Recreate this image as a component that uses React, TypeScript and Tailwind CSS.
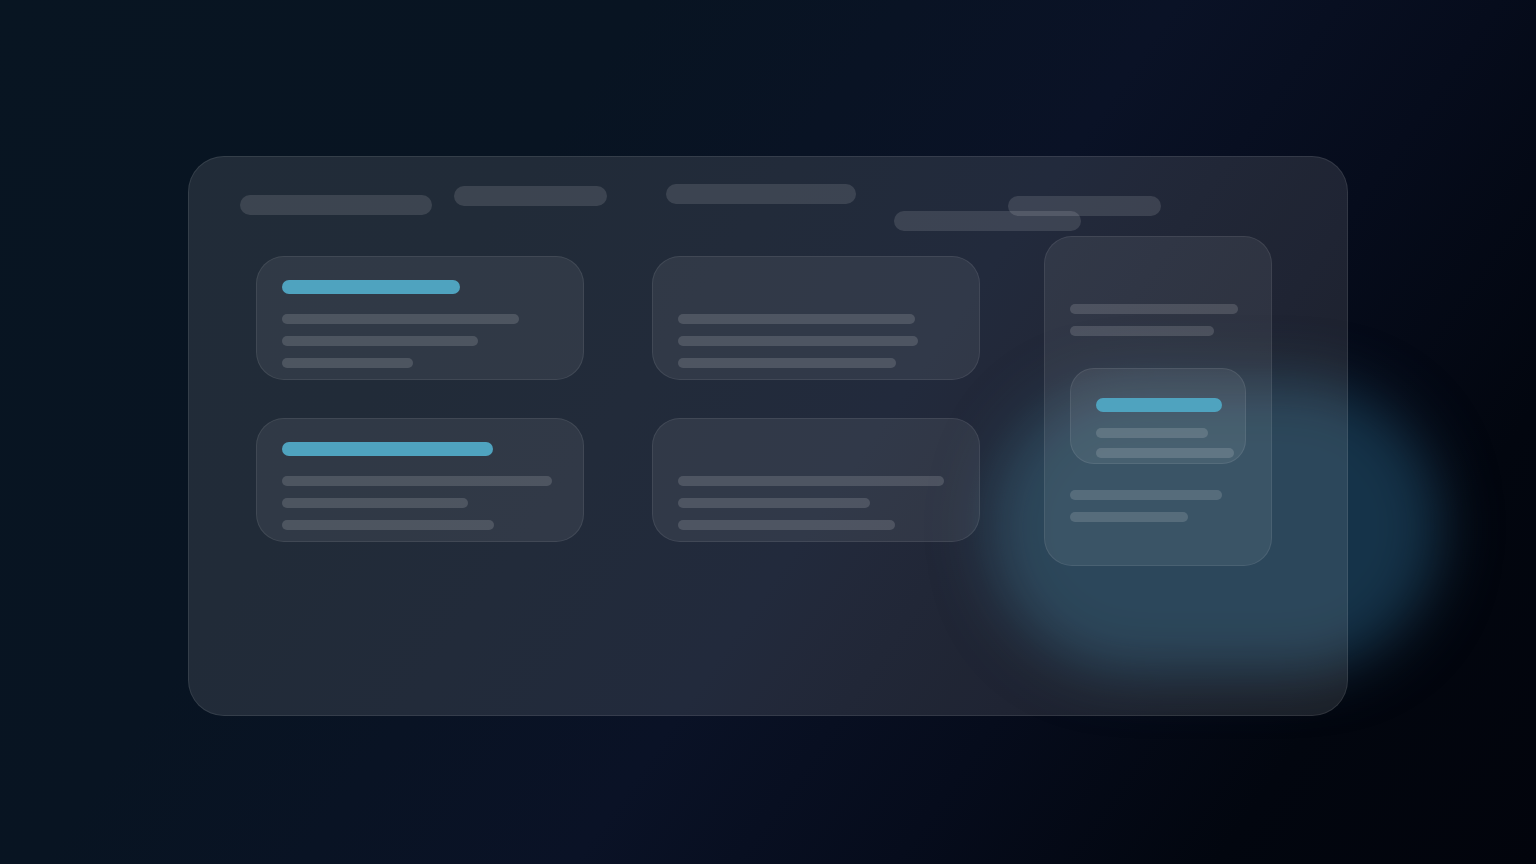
const navPills = [
  { width: "w-[192px]", offset: "mt-[11px] ml-[51px]" },
  { width: "w-[153px]", offset: "mt-[2px] ml-[22px]" },
  { width: "w-[190px]", offset: "mt-0 ml-[59px]" },
  { width: "w-[187px]", offset: "mt-[27px] ml-[38px]" },
  { width: "w-[153px]", offset: "mt-[12px] ml-[-73px]" },
];

const cards = [
  { accent: "w-[178px]", lines: ["w-[237px]", "w-[196px]", "w-[131px]"] },
  { accent: "", lines: ["w-[237px]", "w-[240px]", "w-[218px]"] },
  { accent: "w-[211px]", lines: ["w-[270px]", "w-[186px]", "w-[212px]"] },
  { accent: "", lines: ["w-[266px]", "w-[192px]", "w-[217px]"] },
];

function Line({ width }: { width: string }) {
  return <div className={`h-[10px] rounded-full bg-white/14 ${width}`} />;
}

function Accent({ width }: { width: string }) {
  return <div className={`h-[14px] rounded-full bg-[#4fa3bf] ${width}`} />;
}

export default function App() {
  return (
    <div className="relative h-[864px] w-[1536px] overflow-hidden bg-[linear-gradient(125deg,#081522_0%,#081422_30%,#0a1226_55%,#060c1c_70%,#02060f_85%,#02040c_100%)] pl-[188px] pt-[156px]">
      {/* glow behind the glass panel */}
      <div className="absolute left-[990px] top-[382px] h-[290px] w-[450px] rounded-full bg-[#153349] blur-[28px]" />

      <div className="relative h-[560px] w-[1160px] rounded-[36px] border border-white/9 bg-white/10">
        <div className="flex h-[74px] items-start pt-[27px]">
          {navPills.map((pill, i) => (
            <div key={i} className={`h-[20px] shrink-0 rounded-full bg-white/12 ${pill.width} ${pill.offset}`} />
          ))}
        </div>

        <div className="flex items-start pl-[67px] pt-[25px]">
          <div className="grid w-[724px] grid-cols-[328px_328px] gap-x-[68px] gap-y-[38px]">
            {cards.map((card, i) => (
              <div key={i} className="h-[124px] rounded-[28px] border border-white/8 bg-white/7 px-[25px] pt-[23px]">
                <div className="h-[14px]">{card.accent && <Accent width={card.accent} />}</div>
                <div className="mt-[20px] flex flex-col gap-[12px]">
                  {card.lines.map((line, j) => (
                    <Line key={j} width={line} />
                  ))}
                </div>
              </div>
            ))}
          </div>

          <div className="ml-[64px] mt-[-20px] h-[330px] w-[228px] rounded-[28px] border border-white/8 bg-white/7 px-[25px] pt-[67px]">
            <div className="flex flex-col gap-[12px]">
              <Line width="w-[168px]" />
              <Line width="w-[144px]" />
            </div>
            <div className="mt-[32px] h-[96px] w-[176px] rounded-[24px] border border-white/8 bg-white/7 px-[25px] pt-[29px]">
              <Accent width="w-[126px]" />
              <div className="mt-[16px] flex flex-col gap-[10px]">
                <Line width="w-[112px]" />
                <Line width="w-[138px]" />
              </div>
            </div>
            <div className="mt-[26px] flex flex-col gap-[12px]">
              <Line width="w-[152px]" />
              <Line width="w-[118px]" />
            </div>
          </div>
        </div>
      </div>
    </div>
  );
}
